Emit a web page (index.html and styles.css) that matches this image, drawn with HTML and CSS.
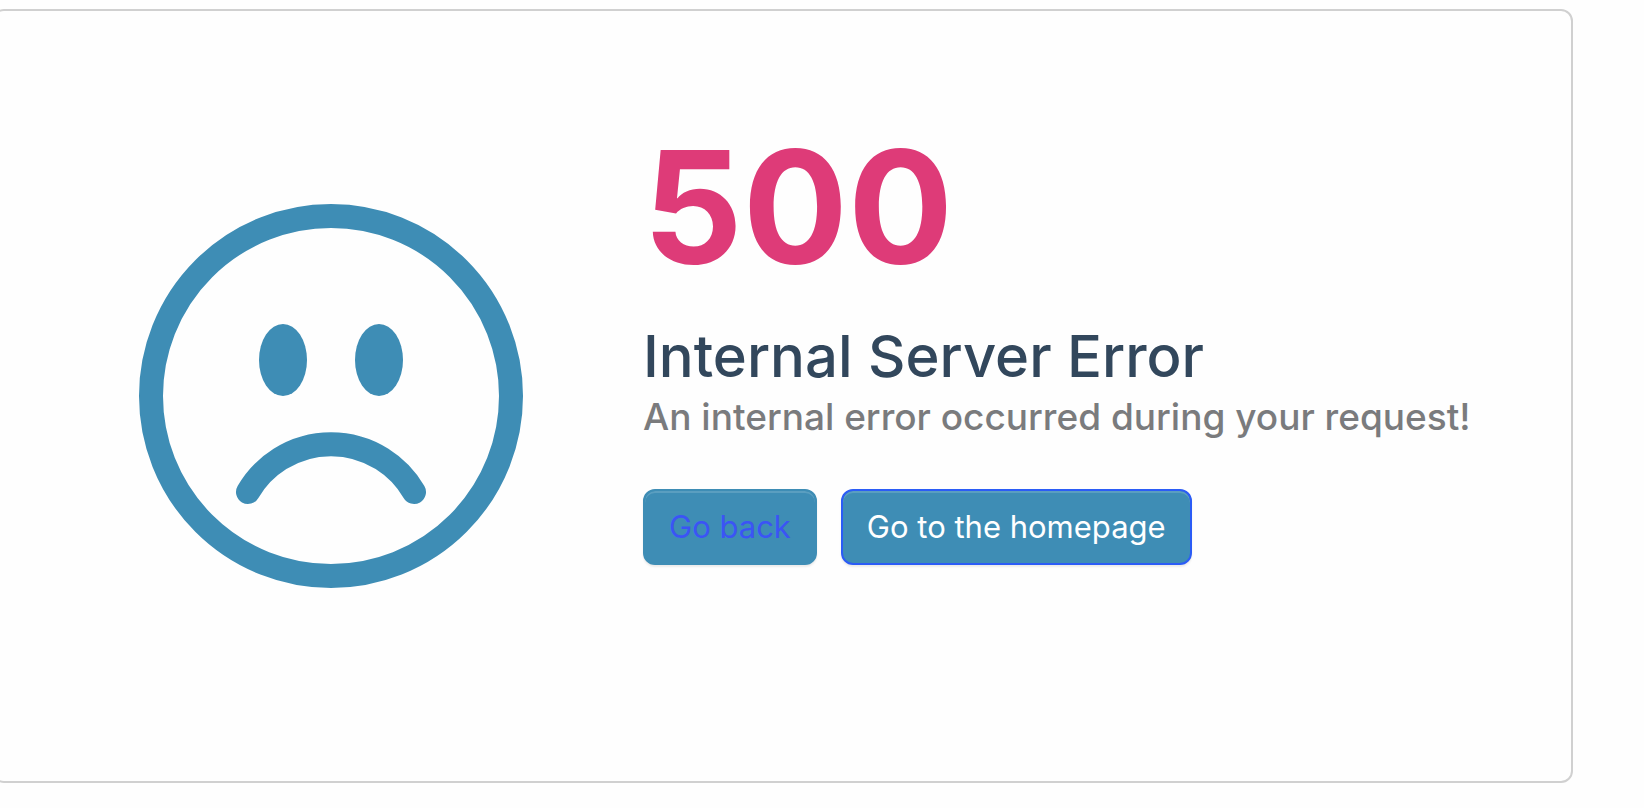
FILE: index.html
```html
<!DOCTYPE html>
<html lang="en">
<head>
<meta charset="utf-8">
<title>Internal Server Error</title>
<link rel="stylesheet" href="styles.css">
</head>
<body>
<main class="card">
  <svg class="face" viewBox="0 0 384 384" aria-hidden="true">
    <circle class="face-line" cx="192" cy="192" r="180"/>
    <ellipse class="face-eye" cx="144" cy="156" rx="24" ry="36"/>
    <ellipse class="face-eye" cx="240" cy="156" rx="24" ry="36"/>
    <path class="face-line" d="M109 288a96 96 0 0 1 166 0"/>
  </svg>
  <div class="content">
    <h1 class="code">500</h1>
    <h2 class="title">Internal Server Error</h2>
    <p class="message">An internal error occurred during your request!</p>
    <div class="actions">
      <button class="btn btn-back" type="button">Go back</button>
      <a class="btn btn-home" href="/">Go to the homepage</a>
    </div>
  </div>
</main>
</body>
</html>
```
FILE: styles.css
```css
* {
  box-sizing: border-box;
}

body {
  margin: 0;
  overflow-x: hidden;
  background: #fefefe;
  font-family: Inter, "Liberation Sans", sans-serif;
}

.card {
  display: flex;
  align-items: center;
  gap: 120px;
  margin: 9px 71px 24px -8px;
  padding: 76px 80px 76px 145px;
  border: 2px solid #d0d0d0;
  border-radius: 12px;
}

.face {
  flex: none;
  width: 384px;
  height: 384px;
}

.face-line {
  fill: none;
  stroke: #3e8db5;
  stroke-width: 24px;
  stroke-linecap: round;
}

.face-eye {
  fill: #3e8db5;
}

.content {
  flex: 1;
  padding-bottom: 140px;
}

.code,
.title,
.message {
  margin: 0;
}

.code {
  color: #de3b78;
  font-size: 156px;
  font-weight: 700;
  line-height: 240px;
}

.title {
  color: #32475c;
  font-size: 58px;
  font-weight: 500;
  line-height: 58px;
}

.message {
  color: #7a7b7d;
  font-size: 37px;
  font-weight: 500;
  line-height: 64px;
  white-space: nowrap;
}

.actions {
  display: flex;
  gap: 24px;
  margin-top: 40px;
}

.btn {
  padding: 12px 24px;
  border: 2px solid #3e8db5;
  border-radius: 12px;
  background: #3e8db5;
  box-shadow: inset 0 2px 0 rgba(255, 255, 255, 0.15), 0 2px 2px rgba(0, 0, 0, 0.08);
  font-family: inherit;
  font-size: 31px;
  font-weight: 400;
  line-height: 48px;
  text-decoration: none;
}

.btn-back {
  color: #3b54f5;
}

.btn-home {
  border-color: #2b5cf6;
  color: #fff;
}
```
